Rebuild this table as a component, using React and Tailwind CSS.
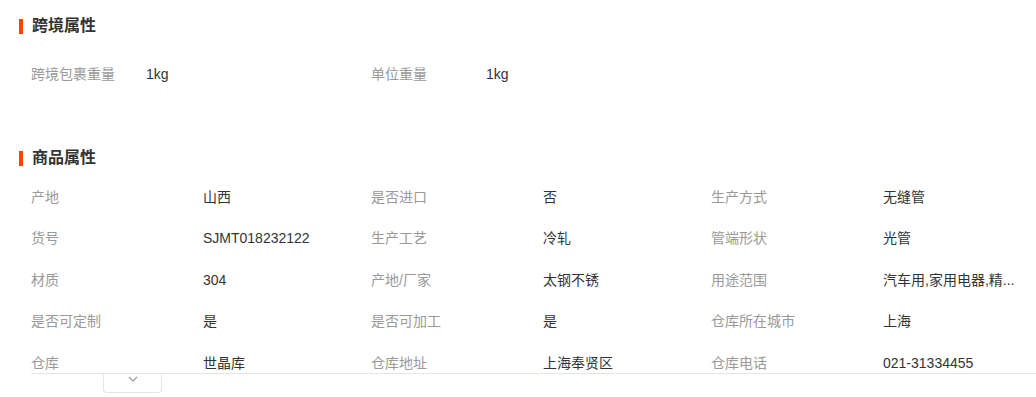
import React from 'react';

const font = { fontFamily: '"Liberation Sans", "Noto Sans CJK SC", sans-serif' };

const crossBorder = [
  ['跨境包裹重量', '1kg'],
  ['单位重量', '1kg'],
];

const goodsAttrs = [
  ['产地', '山西'],
  ['是否进口', '否'],
  ['生产方式', '无缝管'],
  ['货号', 'SJMT018232122'],
  ['生产工艺', '冷轧'],
  ['管端形状', '光管'],
  ['材质', '304'],
  ['产地/厂家', '太钢不锈'],
  ['用途范围', '汽车用,家用电器,精...'],
  ['是否可定制', '是'],
  ['是否可加工', '是'],
  ['仓库所在城市', '上海'],
  ['仓库', '世晶库'],
  ['仓库地址', '上海奉贤区'],
  ['仓库电话', '021-31334455'],
];

function SectionTitle({ children }) {
  return (
    <div className="flex items-center h-[20px] pl-[19px]">
      <span className="w-[4px] h-[15px] bg-[#ff4400]" />
      <h3 className="ml-[9px] text-[16px] leading-[20px] font-bold text-[#333]">{children}</h3>
    </div>
  );
}

export default function App() {
  return (
    <div className="w-[1036px] h-[397px] bg-white overflow-hidden pt-[16px] text-[14px]" style={font}>
      <SectionTitle>跨境属性</SectionTitle>

      <div className="mt-[17px] ml-[31px] flex h-[42px] items-center">
        {crossBorder.map(([k, v]) => (
          <div key={k} className="flex w-[340px]">
            <span className="w-[115px] text-[#999]">{k}</span>
            <span className="text-[#333]">{v}</span>
          </div>
        ))}
      </div>

      <div className="mt-[53px]">
        <SectionTitle>商品属性</SectionTitle>
      </div>

      <div className="ml-[31px] mt-[8px]">
        <div className="h-[198px] overflow-hidden border-b border-[#e5e5e5]">
          <div className="grid grid-cols-[172px_168px_172px_168px_172px_1fr] auto-rows-[41.5px] items-center">
            {goodsAttrs.map(([k, v]) => (
              <React.Fragment key={k}>
                <span className="text-[#999] leading-[20px]">{k}</span>
                <span className="text-[#333] leading-[20px] whitespace-nowrap">{v}</span>
              </React.Fragment>
            ))}
          </div>
        </div>
        <div className="ml-[72px] w-[59px] h-[19px] border border-t-0 border-[#e5e5e5] rounded-b-[4px] flex justify-center pt-[2px]">
          <svg width="10" height="6" viewBox="0 0 10 6" fill="none">
            <path d="M1 1l4 4 4-4" stroke="#999" strokeWidth="1.2" />
          </svg>
        </div>
      </div>
    </div>
  );
}
